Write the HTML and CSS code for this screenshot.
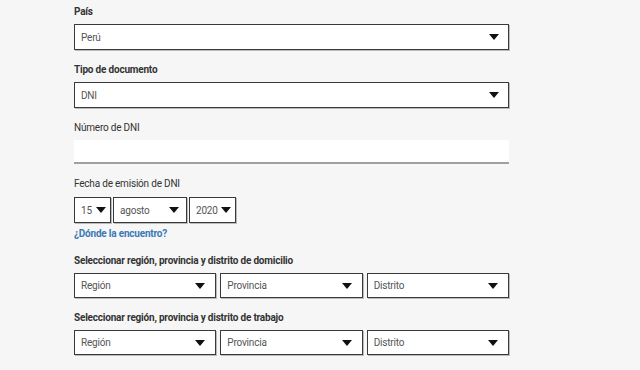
FILE: index.html
```html
<!DOCTYPE html>
<html lang="es">
<head>
  <meta charset="UTF-8">
  <title>Registro</title>
  <link rel="stylesheet" href="styles.css">
</head>
<body>

<form class="form">

  <div class="field">
    <label class="label bold">País</label>
    <div class="select">
      <span>Perú</span>
      <svg class="arrow" viewBox="0 0 10 6"><polygon points="0,0 10,0 5,6"/></svg>
    </div>
  </div>

  <div class="field">
    <label class="label bold">Tipo de documento</label>
    <div class="select">
      <span>DNI</span>
      <svg class="arrow" viewBox="0 0 10 6"><polygon points="0,0 10,0 5,6"/></svg>
    </div>
  </div>

  <div class="field">
    <label class="label">Número de DNI</label>
    <div class="text-input"></div>
  </div>

  <div class="field date-field">
    <label class="label">Fecha de emisión de DNI</label>
    <div class="date-row">
      <div class="select small day">
        <span>15</span>
        <svg class="arrow" viewBox="0 0 10 6"><polygon points="0,0 10,0 5,6"/></svg>
      </div>
      <div class="select small month">
        <span>agosto</span>
        <svg class="arrow" viewBox="0 0 10 6"><polygon points="0,0 10,0 5,6"/></svg>
      </div>
      <div class="select small year">
        <span>2020</span>
        <svg class="arrow" viewBox="0 0 10 6"><polygon points="0,0 10,0 5,6"/></svg>
      </div>
    </div>
    <a class="help-link" href="#">¿Dónde la encuentro?</a>
  </div>

  <div class="field">
    <label class="label bold">Seleccionar región, provincia y distrito de domicilio</label>
    <div class="ubigeo">
      <div class="select">
        <span>Región</span>
        <svg class="arrow" viewBox="0 0 10 6"><polygon points="0,0 10,0 5,6"/></svg>
      </div>
      <div class="select">
        <span>Provincia</span>
        <svg class="arrow" viewBox="0 0 10 6"><polygon points="0,0 10,0 5,6"/></svg>
      </div>
      <div class="select">
        <span>Distrito</span>
        <svg class="arrow" viewBox="0 0 10 6"><polygon points="0,0 10,0 5,6"/></svg>
      </div>
    </div>
  </div>

  <div class="field">
    <label class="label bold">Seleccionar región, provincia y distrito de trabajo</label>
    <div class="ubigeo">
      <div class="select">
        <span>Región</span>
        <svg class="arrow" viewBox="0 0 10 6"><polygon points="0,0 10,0 5,6"/></svg>
      </div>
      <div class="select">
        <span>Provincia</span>
        <svg class="arrow" viewBox="0 0 10 6"><polygon points="0,0 10,0 5,6"/></svg>
      </div>
      <div class="select">
        <span>Distrito</span>
        <svg class="arrow" viewBox="0 0 10 6"><polygon points="0,0 10,0 5,6"/></svg>
      </div>
    </div>
  </div>

</form>

</body>
</html>
```

FILE: styles.css
```css
body {
  background: #f6f6f6;
  color: #333;
  font-family: Roboto, 'Liberation Sans', sans-serif;
  font-size: 10px;
  letter-spacing: -0.2px;
  margin: 0;
}
.form {
  width: 435px;
  padding: 5px 0 0 74px;
}
.field {
  margin-bottom: 13px;
}
.label {
  display: block;
  line-height: 14px;
  margin-bottom: 5px;
  color: #333;
}
.bold {
  font-weight: bold;
}
.select {
  height: 26px;
  box-sizing: border-box;
  background: #fff;
  border: 1px solid #3a3a3a;
  box-shadow: 1px 1px 0 #bbb;
  display: flex;
  align-items: center;
  justify-content: space-between;
  padding: 0 9px 0 6px;
  color: #555;
}
.arrow {
  width: 10px;
  height: 6px;
  fill: #111;
}
.text-input {
  height: 22px;
  background: #fff;
  border-bottom: 2px solid #a0a0a0;
}
.date-field .label {
  margin-bottom: 6px;
}
.date-row {
  display: flex;
  gap: 2px;
}
.select.small {
  padding: 0 4px 0 6px;
}
.day {
  width: 37px;
}
.month {
  width: 74px;
}
.month.small {
  padding-right: 7px;
}
.year {
  width: 47px;
}
.help-link {
  display: block;
  margin-top: 4px;
  line-height: 14px;
  color: #3b78b5;
  font-weight: bold;
  text-decoration: none;
}
.ubigeo {
  display: grid;
  grid-template-columns: 1fr 1fr 1fr;
  gap: 4px;
}
.ubigeo .select {
  height: 25px;
  padding-right: 10px;
}
```
